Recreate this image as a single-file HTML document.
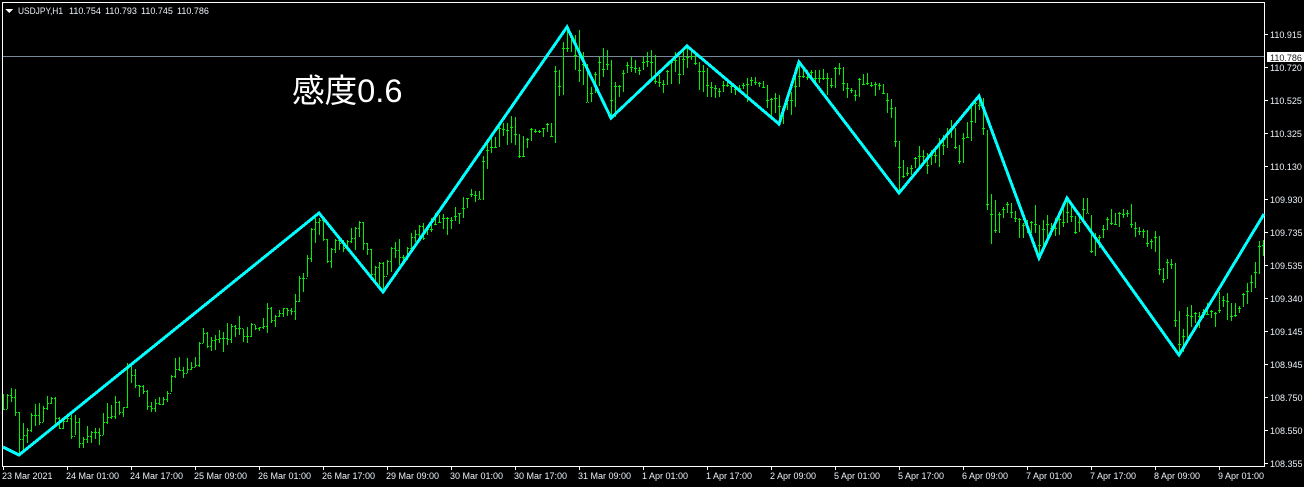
<!DOCTYPE html>
<html lang="ja"><head><meta charset="utf-8"><title>USDJPY,H1</title>
<style>
html,body{margin:0;padding:0;background:#000;width:1304px;height:487px;overflow:hidden}
svg{display:block}
text{font-family:"Liberation Sans","Noto Sans CJK JP",sans-serif;font-size:9px;fill:#eaf2f9}
</style></head><body>
<svg width="1304" height="487" viewBox="0 0 1304 487" xmlns="http://www.w3.org/2000/svg">
<rect width="1304" height="487" fill="#000"/>
<rect x="2.5" y="2.5" width="1262" height="464" fill="none" stroke="#fff" stroke-width="1" shape-rendering="crispEdges"/>
<path d="M3 56.5H1264" stroke="#778899" stroke-width="1" shape-rendering="crispEdges"/>
<path transform="translate(.5 0)" fill="none" stroke="#00f000" stroke-width="1" shape-rendering="crispEdges" d="M3 394V410M7 394V409M11 388V402M15 389V416M19 412V455M23 423V452M27 428V443M31 413V432M35 404V426M39 403V425M43 406V422M47 396V410M51 397V404M55 397V425M59 417V429M63 418V429M67 417V422M71 415V439M75 415V435M79 418V448M83 437V448M87 426V443M91 431V443M95 428V439M99 428V445M103 413V435M107 403V424M111 405V419M115 396V419M119 401V415M123 407V417M127 363V408M131 365V383M135 369V388M139 385V397M143 385V394M147 390V410M151 402V412M155 399V412M159 397V405M163 397V405M167 391V402M171 375V392M175 358V378M179 357V371M183 367V378M187 358V373M191 362V370M195 357V367M199 342V367M203 328V343M207 332V348M211 337V351M215 335V350M219 330V343M223 332V352M227 323V345M231 324V343M235 325V337M239 316V335M243 329V342M247 327V343M251 323V337M255 325V330M259 327V331M263 318V329M267 303V333M271 307V323M275 315V327M279 310V317M283 308V317M287 308V316M291 308V315M295 294V320M299 276V302M303 273V292M307 255V277M311 228V262M315 218V243M319 218V235M323 220V241M327 239V263M331 248V268M335 239V253M339 240V250M343 240V252M347 240V249M351 228V243M355 227V250M359 221V237M363 222V250M367 243V255M371 249V276M375 266V282M379 262V285M383 262V293M387 260V275M391 247V272M395 242V258M399 239V265M403 255V265M407 247V260M411 233V252M415 230V242M419 225V242M423 223V240M427 227V235M431 218V232M435 213V225M439 215V223M443 214V229M447 217V235M451 217V229M455 207V221M459 213V224M463 197V218M467 198V208M471 189V197M475 191V202M479 191V199M483 156V200M487 142V169M491 138V153M495 137V148M499 122V147M503 123V136M507 123V145M511 116V143M515 117V145M519 134V158M523 136V157M527 138V148M531 128V141M535 129V133M539 130V133M543 128V137M547 123V132M551 123V137M555 66V143M559 70V96M563 42V95M567 27V52M571 33V52M575 35V70M579 30V82M583 52V85M587 64V102M591 87V102M595 72V93M599 57V86M603 48V77M607 50V70M611 60V118M615 82V117M619 85V97M623 70V92M627 62V73M631 57V72M635 60V73M639 67V75M643 57V70M647 52V67M651 50V78M655 55V84M659 75V87M663 80V93M667 70V85M671 62V84M675 52V72M679 57V84M683 48V75M687 48V68M691 50V60M695 53V65M699 62V90M703 65V92M707 68V97M711 82V97M715 85V98M719 88V97M723 81V92M727 80V87M731 82V93M735 85V95M739 85V90M743 83V89M747 78V102M751 77V86M755 77V85M759 82V87M763 81V88M767 85V108M771 98V117M775 93V113M779 95V125M783 107V124M787 97V110M791 92V115M795 77V107M799 62V87M803 68V78M807 70V80M811 70V80M815 70V83M819 70V83M823 69V80M827 73V95M831 78V88M835 67V88M839 63V75M843 67V91M847 83V98M851 88V93M855 90V101M859 78V97M863 74V85M867 73V85M871 82V87M875 82V96M879 83V90M883 84V94M887 93V113M891 99V118M895 107V147M899 141V192M903 160V178M907 167V176M911 165V175M915 157V168M919 146V167M923 150V163M927 153V174M931 150V165M935 149V163M939 138V167M943 135V155M947 128V148M951 120V138M955 128V149M959 145V164M963 133V163M967 122V138M971 105V141M975 100V123M979 97V110M983 98V135M987 130V210M991 194V244M995 200V233M999 212V233M1003 207V218M1007 202V213M1011 203V218M1015 211V222M1019 218V238M1023 223V238M1027 220V233M1031 221V233M1035 205V233M1039 225V258M1043 220V247M1047 215V237M1051 223V235M1055 218V236M1059 217V235M1063 205V227M1067 198V223M1071 203V222M1075 216V234M1079 213V232M1083 198V222M1087 198V213M1091 215V253M1095 233V256M1099 235V248M1103 225V238M1107 217V230M1111 209V225M1115 213V225M1119 212V227M1123 209V218M1127 210V217M1131 204V228M1135 222V237M1139 227V235M1143 229V238M1147 230V247M1151 239V249M1155 231V252M1159 236V275M1163 268V283M1167 259V279M1171 259V269M1175 263V327M1179 311V356M1183 329V352M1187 307V338M1191 305V327M1195 312V323M1199 312V328M1203 309V318M1207 303V315M1211 310V318M1215 312V327M1219 292V313M1223 296V307M1227 293V320M1231 303V321M1235 303V317M1239 306V313M1243 293V307M1247 283V304M1251 275V292M1255 262V288M1259 241V274M1263 240V256"/>
<path transform="translate(0 .5)" fill="none" stroke="#00f000" stroke-width="1" shape-rendering="crispEdges" d="M4 409h1M6 409h1M8 395h1M10 395h1M12 397h1M14 397h1M16 412h1M18 412h1M20 439h1M22 439h1M24 435h1M26 435h1M28 430h1M30 430h1M32 415h1M34 415h1M36 415h1M38 415h1M40 422h1M42 422h1M44 408h1M46 408h1M48 403h1M50 403h1M52 398h1M54 398h1M56 418h1M58 418h1M60 428h1M62 428h1M64 421h1M66 421h1M68 418h1M70 418h1M72 436h1M74 436h1M76 422h1M78 422h1M80 443h1M82 443h1M84 439h1M86 439h1M88 436h1M90 436h1M92 432h1M94 432h1M96 432h1M98 432h1M100 435h1M102 435h1M104 422h1M106 422h1M108 417h1M110 417h1M112 416h1M114 416h1M116 402h1M118 402h1M120 412h1M122 412h1M124 407h1M126 407h1M128 365h1M130 365h1M132 375h1M134 375h1M136 385h1M138 385h1M140 386h1M142 386h1M144 391h1M146 391h1M148 406h1M150 406h1M152 408h1M154 408h1M156 403h1M158 403h1M160 404h1M162 404h1M164 399h1M166 399h1M168 393h1M170 393h1M172 376h1M174 376h1M176 369h1M178 369h1M180 370h1M182 370h1M184 373h1M186 373h1M188 369h1M190 369h1M192 367h1M194 367h1M196 365h1M198 365h1M200 343h1M202 343h1M204 333h1M206 333h1M208 346h1M210 346h1M212 340h1M214 340h1M216 339h1M218 339h1M220 338h1M222 338h1M224 338h1M226 338h1M228 339h1M230 339h1M232 326h1M234 326h1M236 328h1M238 328h1M240 328h1M242 328h1M244 336h1M246 336h1M248 336h1M250 336h1M252 324h1M254 324h1M256 328h1M258 328h1M260 327h1M262 327h1M264 326h1M266 326h1M268 308h1M270 308h1M272 320h1M274 320h1M276 316h1M278 316h1M280 313h1M282 313h1M284 308h1M286 308h1M288 310h1M290 310h1M292 311h1M294 311h1M296 301h1M298 301h1M300 278h1M302 278h1M304 278h1M306 278h1M308 258h1M310 258h1M312 229h1M314 229h1M316 222h1M318 222h1M320 220h1M322 220h1M324 239h1M326 239h1M328 261h1M330 261h1M332 249h1M334 249h1M336 240h1M338 240h1M340 243h1M342 243h1M344 248h1M346 248h1M348 241h1M350 241h1M352 238h1M354 238h1M356 228h1M358 228h1M360 222h1M362 222h1M364 243h1M366 243h1M368 249h1M370 249h1M372 274h1M374 274h1M376 267h1M378 267h1M380 263h1M382 263h1M384 276h1M386 276h1M388 261h1M390 261h1M392 248h1M394 248h1M396 250h1M398 250h1M400 257h1M402 257h1M404 257h1M406 257h1M408 248h1M410 248h1M412 237h1M414 237h1M416 234h1M418 234h1M420 226h1M422 226h1M424 238h1M426 229h1M428 229h1M430 229h1M432 229h1M434 224h1M436 224h1M438 222h1M440 222h1M442 218h1M444 218h1M446 218h1M448 218h1M450 220h1M452 220h1M454 216h1M456 216h1M458 213h1M460 213h1M462 208h1M464 208h1M466 198h1M468 198h1M470 194h1M472 194h1M474 195h1M476 195h1M478 199h1M480 199h1M482 161h1M484 161h1M486 150h1M488 150h1M490 147h1M492 147h1M494 147h1M496 147h1M498 128h1M500 128h1M502 129h1M504 129h1M506 130h1M508 130h1M510 127h1M512 127h1M514 134h1M516 134h1M518 156h1M520 156h1M522 156h1M524 156h1M526 139h1M528 139h1M530 129h1M532 129h1M534 131h1M536 131h1M538 131h1M540 131h1M542 128h1M544 128h1M546 124h1M548 124h1M550 136h1M552 136h1M554 71h1M556 71h1M558 86h1M560 86h1M562 48h1M564 48h1M566 48h1M568 48h1M570 37h1M572 37h1M574 55h1M576 55h1M578 70h1M580 70h1M582 64h1M584 64h1M586 102h1M588 102h1M590 93h1M592 93h1M594 74h1M596 74h1M598 62h1M600 62h1M602 69h1M604 69h1M606 64h1M608 64h1M610 100h1M612 100h1M614 86h1M616 86h1M618 86h1M620 86h1M622 73h1M624 73h1M626 65h1M628 65h1M630 67h1M632 67h1M634 68h1M636 68h1M638 70h1M640 70h1M642 62h1M644 62h1M646 61h1M648 61h1M650 62h1M652 62h1M654 81h1M656 81h1M658 82h1M660 82h1M662 84h1M664 84h1M666 71h1M668 71h1M670 62h1M672 62h1M674 60h1M676 60h1M678 74h1M680 74h1M682 59h1M684 59h1M686 57h1M688 57h1M690 56h1M692 56h1M694 63h1M696 63h1M698 71h1M700 71h1M702 71h1M704 71h1M706 85h1M708 85h1M710 87h1M712 87h1M714 88h1M716 88h1M718 91h1M720 91h1M722 85h1M724 85h1M726 85h1M728 85h1M730 86h1M732 86h1M734 89h1M736 89h1M738 88h1M740 88h1M742 85h1M744 85h1M746 84h1M748 84h1M750 80h1M752 80h1M754 82h1M756 82h1M758 83h1M760 83h1M762 87h1M764 87h1M766 100h1M768 100h1M770 99h1M772 99h1M774 98h1M776 98h1M778 106h1M780 106h1M782 108h1M784 108h1M786 100h1M788 100h1M790 100h1M792 100h1M794 86h1M796 86h1M798 76h1M800 76h1M802 76h1M804 76h1M806 77h1M808 77h1M810 72h1M812 72h1M814 78h1M816 78h1M818 78h1M820 78h1M822 78h1M824 78h1M826 78h1M828 78h1M830 85h1M832 85h1M834 68h1M836 68h1M838 68h1M840 68h1M842 83h1M844 83h1M846 88h1M848 88h1M850 90h1M852 90h1M854 95h1M856 95h1M858 79h1M860 79h1M862 84h1M864 84h1M866 83h1M868 83h1M870 85h1M872 85h1M874 84h1M876 84h1M878 85h1M880 85h1M882 93h1M884 93h1M886 100h1M888 100h1M890 108h1M892 108h1M894 141h1M896 141h1M898 167h1M900 167h1M902 176h1M904 176h1M906 173h1M908 173h1M910 168h1M912 168h1M914 158h1M916 158h1M918 156h1M920 156h1M922 156h1M924 156h1M926 165h1M928 165h1M930 155h1M932 155h1M934 155h1M936 155h1M938 143h1M940 143h1M942 145h1M944 145h1M946 133h1M948 133h1M950 128h1M952 128h1M954 147h1M956 147h1M958 161h1M960 161h1M962 138h1M964 138h1M966 137h1M968 137h1M970 121h1M972 121h1M974 103h1M976 103h1M978 105h1M980 105h1M982 128h1M984 128h1M986 204h1M988 204h1M990 214h1M992 214h1M994 230h1M996 230h1M998 214h1M1000 214h1M1002 209h1M1004 209h1M1006 204h1M1008 204h1M1010 212h1M1012 212h1M1014 218h1M1016 218h1M1018 219h1M1020 219h1M1022 225h1M1024 225h1M1026 227h1M1028 227h1M1030 222h1M1032 222h1M1034 224h1M1036 224h1M1038 245h1M1040 245h1M1042 229h1M1044 229h1M1046 224h1M1048 224h1M1050 228h1M1052 228h1M1054 228h1M1056 228h1M1058 219h1M1060 219h1M1062 222h1M1064 222h1M1066 212h1M1068 212h1M1070 216h1M1072 216h1M1074 232h1M1076 232h1M1078 222h1M1080 222h1M1082 209h1M1084 209h1M1086 213h1M1088 213h1M1090 251h1M1092 251h1M1094 238h1M1096 238h1M1098 237h1M1100 237h1M1102 229h1M1104 229h1M1106 219h1M1108 219h1M1110 223h1M1112 223h1M1114 224h1M1116 224h1M1118 213h1M1120 213h1M1122 214h1M1124 214h1M1126 213h1M1128 213h1M1130 224h1M1132 224h1M1134 228h1M1136 228h1M1138 231h1M1140 231h1M1142 231h1M1144 231h1M1146 243h1M1148 243h1M1150 241h1M1152 241h1M1154 237h1M1156 237h1M1158 269h1M1160 269h1M1162 279h1M1164 279h1M1166 262h1M1168 262h1M1170 264h1M1172 264h1M1174 320h1M1176 320h1M1178 344h1M1180 344h1M1182 336h1M1184 336h1M1186 315h1M1188 315h1M1190 316h1M1192 316h1M1194 313h1M1196 313h1M1198 316h1M1200 316h1M1202 312h1M1204 312h1M1206 314h1M1208 314h1M1210 311h1M1212 311h1M1214 313h1M1216 313h1M1218 310h1M1220 310h1M1222 300h1M1224 300h1M1226 301h1M1228 301h1M1230 316h1M1232 316h1M1234 315h1M1236 315h1M1238 308h1M1240 308h1M1242 294h1M1244 294h1M1246 291h1M1248 291h1M1250 282h1M1252 282h1M1254 272h1M1256 272h1M1258 246h1M1260 246h1M1262 245h1"/>
<polyline fill="none" stroke="#00ffff" stroke-width="3" stroke-linejoin="miter" shape-rendering="crispEdges" points="3,447 19,455 319,213 383,292 567,27 611,118 687,46 779,124 799,62 899,193 979,96 1039,258 1067,198 1179,355 1264,214"/>
<path d="M5 9h8l-4 4z" fill="#fff" shape-rendering="crispEdges"/>
<text x="18" y="14" textLength="45" lengthAdjust="spacingAndGlyphs">USDJPY,H1</text>
<text x="69" y="14">110.754</text>
<text x="105" y="14">110.793</text>
<text x="141" y="14">110.745</text>
<text x="177" y="14">110.786</text>
<text x="292" y="102" style="font-size:32.6px;fill:#fff">感度0.6</text>
<path stroke="#fff" stroke-width="1" shape-rendering="crispEdges" d="M1265 34.5h3M1265 67.5h3M1265 100.5h3M1265 133.5h3M1265 166.5h3M1265 199.5h3M1265 232.5h3M1265 265.5h3M1265 298.5h3M1265 331.5h3M1265 364.5h3M1265 397.5h3M1265 430.5h3M1265 463.5h3M3.5 467v3M67.5 467v3M131.5 467v3M195.5 467v3M259.5 467v3M323.5 467v3M387.5 467v3M451.5 467v3M515.5 467v3M579.5 467v3M643.5 467v3M707.5 467v3M771.5 467v3M835.5 467v3M899.5 467v3M963.5 467v3M1027.5 467v3M1091.5 467v3M1155.5 467v3M1219.5 467v3"/>
<text x="1270" y="38">110.915</text>
<rect x="1267" y="52" width="37" height="10" fill="#fff"/>
<text x="1270" y="61" style="fill:#1a1a1a">110.786</text>
<text x="1270" y="71">110.720</text>
<text x="1270" y="104">110.525</text>
<text x="1270" y="137">110.325</text>
<text x="1270" y="170">110.130</text>
<text x="1270" y="203">109.930</text>
<text x="1270" y="236">109.735</text>
<text x="1270" y="269">109.535</text>
<text x="1270" y="302">109.340</text>
<text x="1270" y="335">109.145</text>
<text x="1270" y="368">108.945</text>
<text x="1270" y="401">108.750</text>
<text x="1270" y="434">108.550</text>
<text x="1270" y="467">108.355</text>
<text x="2" y="479">23 Mar 2021</text>
<text x="66" y="479">24 Mar 01:00</text>
<text x="130" y="479">24 Mar 17:00</text>
<text x="194" y="479">25 Mar 09:00</text>
<text x="258" y="479">26 Mar 01:00</text>
<text x="322" y="479">26 Mar 17:00</text>
<text x="386" y="479">29 Mar 09:00</text>
<text x="450" y="479">30 Mar 01:00</text>
<text x="514" y="479">30 Mar 17:00</text>
<text x="578" y="479">31 Mar 09:00</text>
<text x="642" y="479">1 Apr 01:00</text>
<text x="706" y="479">1 Apr 17:00</text>
<text x="770" y="479">2 Apr 09:00</text>
<text x="834" y="479">5 Apr 01:00</text>
<text x="898" y="479">5 Apr 17:00</text>
<text x="962" y="479">6 Apr 09:00</text>
<text x="1026" y="479">7 Apr 01:00</text>
<text x="1090" y="479">7 Apr 17:00</text>
<text x="1154" y="479">8 Apr 09:00</text>
<text x="1218" y="479">9 Apr 01:00</text>
</svg>
</body></html>
